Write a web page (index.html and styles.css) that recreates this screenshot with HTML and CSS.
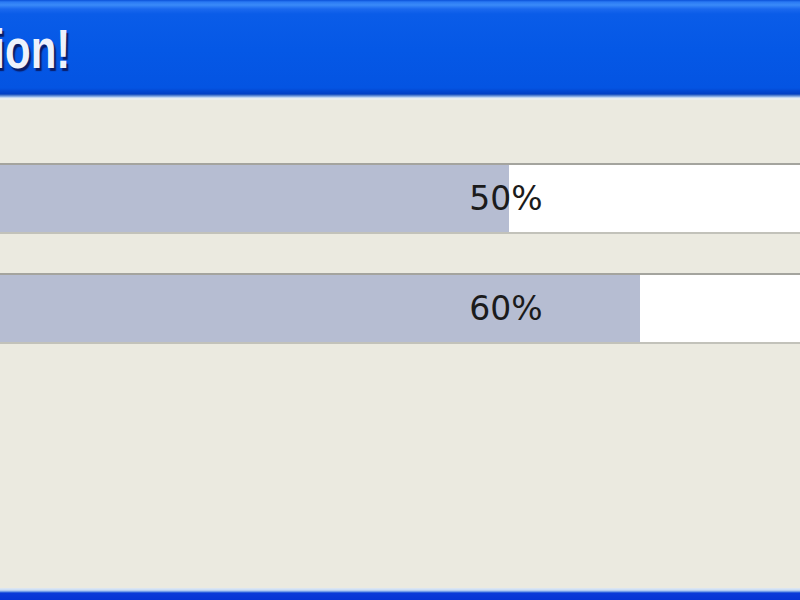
FILE: index.html
```html
<!DOCTYPE html>
<html lang="en">
<head>
    <meta charset="UTF-8">
    <meta name="viewport" content="width=device-width, initial-scale=1.0">
    <title>Progress Animation!</title>
    <link rel="stylesheet" href="styles.css">
</head>
<body>
    <div class="window">
        <div class="titlebar">
            <span class="title">Animation!</span>
        </div>
        <div class="content">
            <div class="progress">
                <div class="fill" style="width: 50%"></div>
                <span class="label">50%</span>
            </div>
            <div class="progress">
                <div class="fill" style="width: 60%"></div>
                <span class="label">60%</span>
            </div>
        </div>
        <div class="frame-bottom"></div>
    </div>
</body>
</html>
```

FILE: styles.css
```css
html, body { margin: 0; height: 100%; overflow: hidden; background: #ebeae0; }
body { font-family: "DejaVu Sans", Tahoma, sans-serif; }

.window { width: 1310px; height: 600px; margin-left: -146px; display: flex; flex-direction: column; background: #ebeae0; }

/* XP style caption bar */
.titlebar { height: 100px; flex: none; display: flex; align-items: flex-end; padding-left: 0; box-sizing: border-box; overflow: hidden;
    background: linear-gradient(to bottom, #0a50d8 0, #2a7af4 2px, #3a8af8 5px, #1a68ee 9px, #0a5ce8 14px, #0558e6 50%, #0454e2 88px, #0348d2 91px, #0340c4 94px, #3a6ac4 95px, #9fc0f0 97px, #e4ecf4 98px, #eef0ec 100px); }
.title { font-family: "Liberation Sans", Arial, sans-serif; font-weight: bold; font-size: 42px; line-height: 1; color: #eef2fc;
    text-shadow: 2px 2px 1px #0a1c66; transform: scaleY(1.3); transform-origin: left bottom; margin: 0 0 23px -3px; white-space: nowrap; }

.content { flex: 1; padding-top: 63px; display: flex; flex-direction: column; gap: 39px; }

.progress { position: relative; height: 67px; background: #fff; border-top: 2px solid #a4a49e; border-bottom: 2px solid #c2c2ba; }
.fill { height: 100%; background: #b6bdd2; }
.label { position: absolute; inset: 0; display: flex; align-items: center; justify-content: center; padding-right: 6px;
    font-size: 33px; color: #1b1b1b; }

.frame-bottom { height: 12px; flex: none;
    background: linear-gradient(to bottom, #e0e8f2 0, #c8dcf4 2px, #9ab8ee 3px, #4a7ee0 4px, #0a3ad8 5px, #0634d4 100%); }
```
